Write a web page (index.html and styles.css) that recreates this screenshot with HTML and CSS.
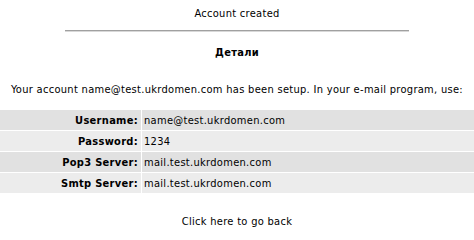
FILE: index.html
```html
<!DOCTYPE html>
<html>
<head>
<meta charset="utf-8">
<link rel="stylesheet" href="styles.css">
</head>
<body>
<div class="title">Account created</div>
<hr class="rule">
<div class="heading">Детали</div>
<p class="intro">Your account name@test.ukrdomen.com has been setup. In your e-mail program, use:</p>
<table class="details">
  <tr class="dark"><th>Username:</th><td>name@test.ukrdomen.com</td></tr>
  <tr class="light"><th>Password:</th><td>1234</td></tr>
  <tr class="dark"><th>Pop3 Server:</th><td>mail.test.ukrdomen.com</td></tr>
  <tr class="light"><th>Smtp Server:</th><td>mail.test.ukrdomen.com</td></tr>
</table>
<div class="back"><a href="#">Click here to go back</a></div>
</body>
</html>
```
FILE: styles.css
```css
body {
  margin: 0;
  background: #fff;
  color: #000;
  font-family: "DejaVu Sans Condensed", "DejaVu Sans", sans-serif;
  font-size: 11px;
  line-height: 13px;
  letter-spacing: 0.3px;
}
.title {
  text-align: center;
  padding-top: 7px;
}
.rule {
  width: 344px;
  margin: 10px auto 0;
  border: 0;
  border-top: 1px solid #a0a0a0;
  border-bottom: 1px solid #d8d8d8;
  height: 0;
}
.heading {
  text-align: center;
  font-weight: bold;
  margin-top: 14px;
}
.intro {
  text-align: center;
  margin: 24px 0 0;
}
.details {
  width: 100%;
  border-collapse: separate;
  border-spacing: 0 1px;
  margin-top: 13px;
}
.details th {
  width: 142px;
  text-align: right;
  font-weight: bold;
  padding: 0 3px 0 0;
  height: 20px;
  border-right: 1px solid #fff;
  box-sizing: border-box;
}
.details td {
  padding: 0 0 0 2px;
  height: 20px;
  box-sizing: border-box;
}
.dark th, .dark td { background: #e1e1e1; }
.light th, .light td { background: #ececec; }
.back {
  text-align: center;
  margin-top: 21px;
}
.back a {
  color: #000;
  text-decoration: none;
}
```
